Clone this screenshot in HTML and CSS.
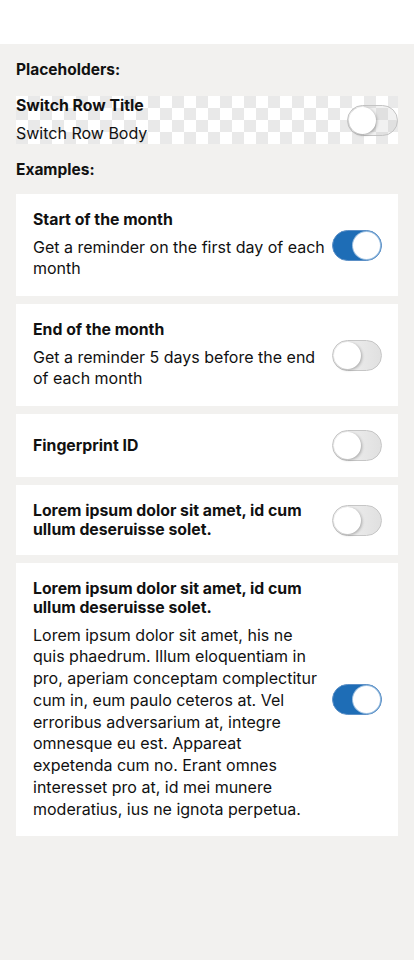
FILE: index.html
```html
<!DOCTYPE html>
<html lang="en">
<head>
<meta charset="utf-8">
<title>Switch Rows</title>
<link rel="stylesheet" href="styles.css">
</head>
<body>
<div class="topbar"></div>
<main class="content">
  <h2 class="section-label">Placeholders:</h2>
  <div class="placeholder-row">
    <div class="row-text">
      <div class="row-title">Switch Row Title</div>
      <div class="row-body">Switch Row Body</div>
    </div>
    <span class="switch switch-ghost"><span class="knob"></span></span>
  </div>
  <h2 class="section-label examples">Examples:</h2>
  <div class="cards">
    <div class="card">
      <div class="row-text">
        <div class="row-title">Start of the month</div>
        <div class="row-body">Get a reminder on the first day of each month</div>
      </div>
      <span class="switch on"><span class="knob"></span></span>
    </div>
    <div class="card">
      <div class="row-text">
        <div class="row-title">End of the month</div>
        <div class="row-body">Get a reminder 5 days before the end of each month</div>
      </div>
      <span class="switch"><span class="knob"></span></span>
    </div>
    <div class="card">
      <div class="row-text">
        <div class="row-title">Fingerprint ID</div>
      </div>
      <span class="switch"><span class="knob"></span></span>
    </div>
    <div class="card">
      <div class="row-text">
        <div class="row-title">Lorem ipsum dolor sit amet, id cum ullum deseruisse solet.</div>
      </div>
      <span class="switch"><span class="knob"></span></span>
    </div>
    <div class="card">
      <div class="row-text">
        <div class="row-title">Lorem ipsum dolor sit amet, id cum ullum deseruisse solet.</div>
        <div class="row-body">Lorem ipsum dolor sit amet, his ne quis phaedrum. Illum eloquentiam in pro, aperiam conceptam complectitur cum in, eum paulo ceteros at. Vel erroribus adversarium at, integre omnesque eu est. Appareat expetenda cum no. Erant omnes interesset pro at, id mei munere moderatius, ius ne ignota perpetua.</div>
      </div>
      <span class="switch on"><span class="knob"></span></span>
    </div>
  </div>
</main>
</body>
</html>
```
FILE: styles.css
```css
* { box-sizing: border-box; }
html, body { margin: 0; padding: 0; }
body {
  background: #f2f1ef;
  font-family: Inter, "Noto Sans", "Liberation Sans", sans-serif;
  color: #111;
  min-height: 960px;
}
.topbar {
  height: 44px;
  background: #ffffff;
}
.content {
  padding: 16px 16px 40px;
}
.section-label {
  margin: 0;
  font-size: 15.5px;
  line-height: 19px;
  font-weight: 700;
}
.examples { margin-top: 16px; }
.placeholder-row {
  margin-top: 17px;
  height: 48px;
  display: flex;
  align-items: center;
  justify-content: space-between;
  background-color: #ffffff;
  background-image:
    linear-gradient(45deg, #e9e9e9 25%, transparent 25%, transparent 75%, #e9e9e9 75%),
    linear-gradient(45deg, #e9e9e9 25%, transparent 25%, transparent 75%, #e9e9e9 75%);
  background-size: 24px 24px;
  background-position: 0 0, 12px 12px;
}
.placeholder-row .row-text { gap: 7px; }
.placeholder-row .row-body { line-height: 22px; }
.row-text {
  flex: 1;
  min-width: 0;
  display: flex;
  flex-direction: column;
  gap: 7.5px;
}
.row-title {
  font-size: 15.8px;
  line-height: 19px;
  font-weight: 700;
}
.row-body {
  font-size: 16px;
  line-height: 21.75px;
  font-weight: 400;
}
.cards {
  margin-top: 15px;
  display: flex;
  flex-direction: column;
  gap: 8px;
}
.card {
  background: #ffffff;
  padding: 16px 16px 16px 17px;
  display: flex;
  align-items: center;
  gap: 7px;
}
.switch {
  position: relative;
  flex: none;
  width: 50px;
  height: 31px;
  border-radius: 16px;
  background: linear-gradient(90deg, #f4f4f4, #e0e0e0);
  border: 1px solid #c6c6c6;
}
.switch .knob {
  position: absolute;
  top: 1px;
  left: 1px;
  width: 27px;
  height: 27px;
  border-radius: 50%;
  background: #ffffff;
  box-shadow: 1px 1px 3px rgba(0,0,0,0.28);
}
.switch.on {
  background: #1e6db6;
  border-color: #5b8fc6;
}
.switch.on .knob {
  left: auto;
  right: 1px;
  box-shadow: 0 0 0 1px #9cbfe0;
}
.switch-ghost {
  width: 51px;
  background: rgba(200,200,200,0.25);
  border-color: #c4c4c4;
}
```
